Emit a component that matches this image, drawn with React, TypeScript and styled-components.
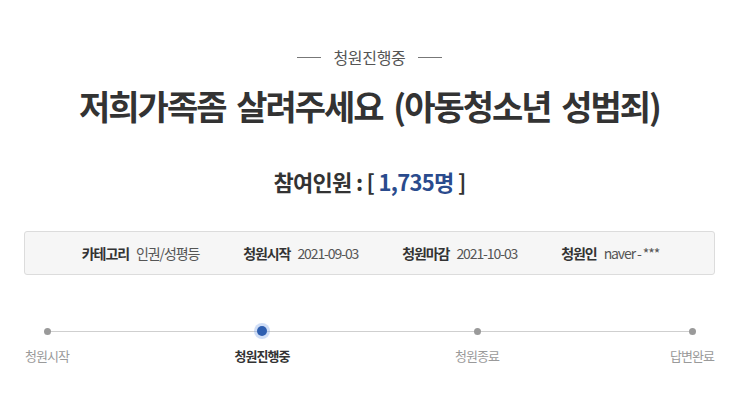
import styled, { createGlobalStyle } from "styled-components";

const GlobalStyle = createGlobalStyle`
  html, body {
    margin: 0;
    padding: 0;
    background: #fff;
  }
  body {
    font-family: "Noto Sans CJK KR", "Noto Sans", sans-serif;
    color: #333;
  }
`;

const Page = styled.div`
  width: 739px;
  padding-top: 44px;
  box-sizing: border-box;
`;

const Status = styled.div`
  display: flex;
  align-items: center;
  justify-content: center;
  gap: 12px;
  font-size: 16px;
  letter-spacing: -0.3px;
  color: #555;
  line-height: 26px;

  &::before,
  &::after {
    content: "";
    width: 24px;
    height: 1px;
    background: #777;
  }
`;

const Title = styled.h1`
  margin: 14px 0 0;
  text-align: center;
  font-size: 34px;
  font-weight: 700;
  letter-spacing: -2px;
  line-height: 44px;
  color: #333;
  word-spacing: 5px;
`;

const Count = styled.div`
  margin-top: 38px;
  text-align: center;
  font-size: 22px;
  font-weight: 700;
  letter-spacing: -0.7px;
  line-height: 30px;
  color: #333;
`;

const Num = styled.span`
  color: #2a4b8d;
`;

const InfoBox = styled.div`
  margin: 35px 24px 0;
  height: 44px;
  box-sizing: border-box;
  background: #f6f6f6;
  border: 1px solid #dcdcdc;
  border-radius: 3px;
  display: flex;
  align-items: center;
  justify-content: center;
  gap: 44px;
  padding-left: 2px;
`;

const Info = styled.div`
  display: flex;
  align-items: center;
  gap: 7px;
  font-size: 14px;
  letter-spacing: -1.1px;
  white-space: nowrap;
`;

const InfoLabel = styled.span`
  font-weight: 700;
  color: #333;
`;

const InfoValue = styled.span`
  color: #555;
`;

const Steps = styled.div`
  position: relative;
  margin: 50px 17px 0;
  display: flex;
  justify-content: space-between;

  &::before {
    content: "";
    position: absolute;
    left: 30px;
    right: 30px;
    top: 6px;
    height: 1px;
    background: #cfcfcf;
  }
`;

const Step = styled.div`
  width: 60px;
  display: flex;
  flex-direction: column;
  align-items: center;
  gap: 9px;
`;

const Dot = styled.span<{ $active?: boolean }>`
  position: relative;
  width: ${(p) => (p.$active ? "10px" : "7px")};
  height: ${(p) => (p.$active ? "10px" : "7px")};
  margin: ${(p) => (p.$active ? "1px 0" : "3px 0 2px")};
  border-radius: 50%;
  background: ${(p) => (p.$active ? "#2f5fb0" : "#9a9a9a")};
  box-shadow: ${(p) =>
    p.$active ? "0 0 0 3px rgba(120, 160, 230, 0.35)" : "none"};
`;

const StepLabel = styled.span<{ $active?: boolean }>`
  font-size: 13px;
  letter-spacing: -1px;
  white-space: nowrap;
  font-weight: ${(p) => (p.$active ? 700 : 400)};
  color: ${(p) => (p.$active ? "#333" : "#9a9a9a")};
`;

const info = [
  ["카테고리", "인권/성평등"],
  ["청원시작", "2021-09-03"],
  ["청원마감", "2021-10-03"],
  ["청원인", "naver - ***"],
];

const steps = ["청원시작", "청원진행중", "청원종료", "답변완료"];

export default function App() {
  return (
    <>
      <GlobalStyle />
      <Page>
        <Status>청원진행중</Status>
        <Title>저희가족좀 살려주세요 (아동청소년 성범죄)</Title>
        <Count>
          참여인원 : [ <Num>1,735명</Num> ]
        </Count>
        <InfoBox>
          {info.map(([label, value]) => (
            <Info key={label}>
              <InfoLabel>{label}</InfoLabel>
              <InfoValue>{value}</InfoValue>
            </Info>
          ))}
        </InfoBox>
        <Steps>
          {steps.map((s, i) => (
            <Step key={s}>
              <Dot $active={i === 1} />
              <StepLabel $active={i === 1}>{s}</StepLabel>
            </Step>
          ))}
        </Steps>
      </Page>
    </>
  );
}
